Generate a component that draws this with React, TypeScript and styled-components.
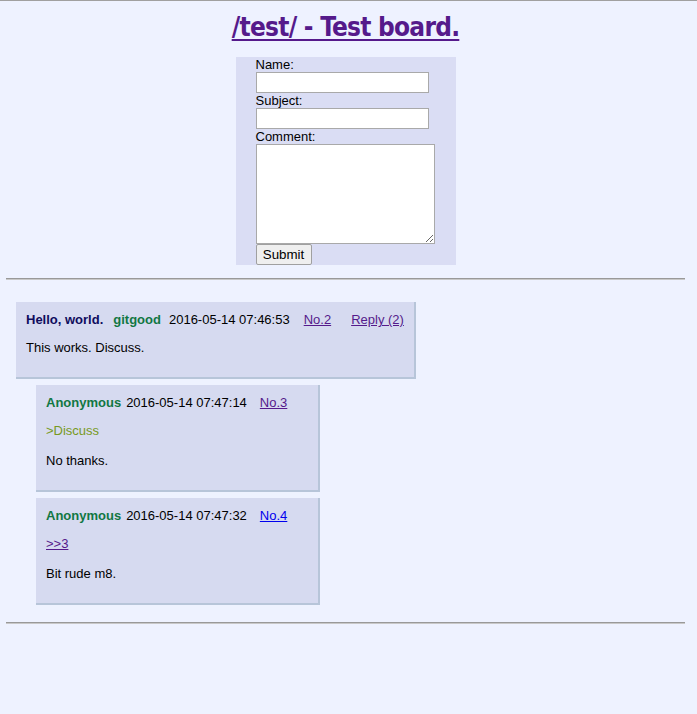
import React from "react";
import styled, { createGlobalStyle } from "styled-components";

const Global = createGlobalStyle`
  html, body { margin: 0; padding: 0; background: #EEF2FF; }
  body {
    border-top: 1px solid #a0a0a0;
    padding: 0 12px 0 6px;
    font-family: "Liberation Sans", Arial, sans-serif;
    font-size: 13px;
    color: #000;
  }
`;

const Page = styled.div`
  display: flex;
  flex-direction: column;
`;

const TitleWrap = styled.h1`
  margin: 9px 0 0;
  text-align: center;
  font-family: "DejaVu Sans Condensed", "DejaVu Sans", sans-serif;
  font-weight: bold;
  font-size: 26px;
  line-height: 35px;
  letter-spacing: -0.75px;
`;

const TitleLink = styled.a`
  color: #551A8B;
  text-decoration: underline;
  text-underline-offset: 3px;
  text-decoration-thickness: 2px;
`;

const PostForm = styled.form`
  align-self: center;
  margin-top: 12px;
  width: 180px;
  padding: 0 20px;
  background: #DADDF4;
  display: flex;
  flex-direction: column;
  align-items: flex-start;
`;

const Label = styled.label`
  line-height: 15px;
  color: #000;
`;

const TextInput = styled.input`
  box-sizing: border-box;
  width: 173px;
  height: 21px;
  margin: 0;
  border: 1px solid #a9a9a9;
  background: #fff;
  padding: 1px 2px;
`;

const CommentArea = styled.textarea`
  box-sizing: border-box;
  width: 179px;
  height: 100px;
  margin: 0;
  border: 1px solid #a9a9a9;
  background: #fff;
  display: block;
`;

const SubmitButton = styled.button`
  box-sizing: border-box;
  height: 21px;
  width: 56px;
  margin: 0;
  padding: 0;
  font-family: "Liberation Sans", Arial, sans-serif;
  font-size: 13.33px;
  color: #000;
  background: #efefef;
  border: 1px solid #a0a0a0;
  border-radius: 2px;
`;

const Rule = styled.hr<{ $top: number }>`
  margin: ${(p) => p.$top}px 0 0;
  border: none;
  border-top: 1px solid #999;
  border-bottom: 1px solid #c8c8c8;
  height: 0;
`;

const Thread = styled.div`
  margin: 22px 0 0 10px;
  display: flex;
  flex-direction: column;
  align-items: flex-start;
  gap: 6px;
`;

const Post = styled.div<{ $indent: number; $width: number }>`
  box-sizing: border-box;
  margin-left: ${(p) => p.$indent}px;
  width: ${(p) => p.$width}px;
  background: #D6DAF0;
  border-right: 2px solid #B7C5D9;
  border-bottom: 2px solid #B7C5D9;
  padding: 10px 10px 9px;
`;

const Header = styled.div`
  display: flex;
  align-items: baseline;
  line-height: 15px;
  white-space: nowrap;
`;

const Subject = styled.span`
  color: #0F0C5D;
  font-weight: bold;
`;

const Name = styled.span<{ $gap: number }>`
  color: #117743;
  font-weight: bold;
  margin-left: ${(p) => p.$gap}px;
`;

const DateTime = styled.span<{ $gap: number }>`
  margin-left: ${(p) => p.$gap}px;
`;

const PostLink = styled.a<{ $gap: number; $visited?: boolean }>`
  margin-left: ${(p) => p.$gap}px;
  color: ${(p) => (p.$visited ? "#551A8B" : "#0000EE")};
  text-decoration: underline;
`;

const Body = styled.blockquote`
  margin: 13px 0 13px;
  line-height: 15px;
`;

const Quote = styled.span`
  color: #789922;
`;

const QuoteLink = styled.a`
  color: #551A8B;
  text-decoration: underline;
`;

export default function App() {
  return (
    <>
      <Global />
      <Page>
        <TitleWrap>
          <TitleLink href="#">/test/ - Test board.</TitleLink>
        </TitleWrap>
        <PostForm onSubmit={(e) => e.preventDefault()}>
          <Label>Name:</Label>
          <TextInput type="text" />
          <Label>Subject:</Label>
          <TextInput type="text" />
          <Label>Comment:</Label>
          <CommentArea />
          <SubmitButton type="submit">Submit</SubmitButton>
        </PostForm>
        <Rule $top={13} />
        <Thread>
          <Post $indent={0} $width={400}>
            <Header>
              <Subject>Hello, world.</Subject>
              <Name $gap={10}>gitgood</Name>
              <DateTime $gap={8}>2016-05-14 07:46:53</DateTime>
              <PostLink $gap={14} $visited href="#">No.2</PostLink>
              <PostLink $gap={20} $visited href="#">Reply (2)</PostLink>
            </Header>
            <Body>This works. Discuss.</Body>
          </Post>
          <Post $indent={20} $width={284}>
            <Header>
              <Name $gap={0}>Anonymous</Name>
              <DateTime $gap={5}>2016-05-14 07:47:14</DateTime>
              <PostLink $gap={13} $visited href="#">No.3</PostLink>
            </Header>
            <Body>
              <Quote>&gt;Discuss</Quote>
              <br />
              <br />
              No thanks.
            </Body>
          </Post>
          <Post $indent={20} $width={284}>
            <Header>
              <Name $gap={0}>Anonymous</Name>
              <DateTime $gap={5}>2016-05-14 07:47:32</DateTime>
              <PostLink $gap={13} href="#">No.4</PostLink>
            </Header>
            <Body>
              <QuoteLink href="#">&gt;&gt;3</QuoteLink>
              <br />
              <br />
              Bit rude m8.
            </Body>
          </Post>
        </Thread>
        <Rule $top={17} />
      </Page>
    </>
  );
}
